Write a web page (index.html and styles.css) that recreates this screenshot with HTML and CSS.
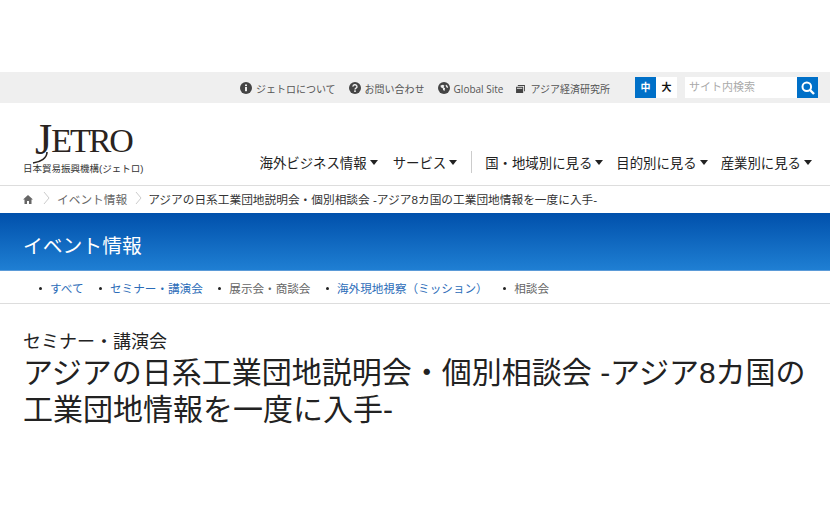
FILE: index.html
```html
<!DOCTYPE html>
<html lang="ja">
<head>
<meta charset="UTF-8" />
<title>アジアの日系工業団地説明会・個別相談会</title>
<link rel="stylesheet" href="styles.css">
</head>
<body>

<!-- Utility bar -->
<div class="util">
  <a class="util-link"><svg class="util-icon" viewBox="0 0 12 12"><circle cx="6" cy="6" r="6" fill="#444"/><rect x="5" y="5" width="2" height="4.2" fill="#efefef"/><rect x="5" y="2.5" width="2" height="1.6" fill="#efefef"/></svg>ジェトロについて</a>
  <a class="util-link"><svg class="util-icon" viewBox="0 0 12 12"><circle cx="6" cy="6" r="6" fill="#444"/><path d="M4 4.6a2 1.8 0 1 1 3 1.5c-.7.4-1 .7-1 1.4" fill="none" stroke="#efefef" stroke-width="1.4"/><rect x="5.1" y="8.4" width="1.8" height="1.5" fill="#efefef"/></svg>お問い合わせ</a>
  <a class="util-link latin"><svg class="util-icon" viewBox="0 0 12 12"><circle cx="6" cy="6" r="6" fill="#444"/><path d="M2.5 3.5l2.5-.8 1.5 1-1 1.6 1.6 1-.6 2.6-1.4-.8-.3-1.8-2-1zM8 2.5l1.6 1.4.6 2-1.6-.5-1-1.6z" fill="#efefef"/></svg>Global Site</a>
  <a class="util-link"><svg class="util-icon-small" viewBox="0 0 10 9"><path d="M2 0h8v7H9V1H2z" fill="#444"/><rect x="0" y="2" width="8" height="7" fill="#444"/><rect x="1" y="3.2" width="6" height="1" fill="#efefef"/></svg>アジア経済研究所</a>
  <div class="size-switch">
    <span class="size-btn active">中</span>
    <span class="size-btn">大</span>
  </div>
  <div class="search">
    <span class="search-input">サイト内検索</span>
    <span class="search-btn"><svg viewBox="0 0 14 14" width="14" height="14"><circle cx="5.8" cy="5.8" r="4.3" fill="none" stroke="#fff" stroke-width="2"/><path d="M9 9l4 4" stroke="#fff" stroke-width="2.4"/></svg></span>
  </div>
</div>

<!-- Header -->
<div class="header">
  <div class="logo">
    <div class="logo-mark"><span class="logo-j">J<svg class="logo-tail" viewBox="0 0 18 12"><path d="M15 0c0 6-6 10-14 11" fill="none" stroke="#2a2320" stroke-width="1.6"/></svg></span>ETRO</div>
    <div class="logo-sub">日本貿易振興機構(ジェトロ)</div>
  </div>
  <div class="gnav">
    <a class="gnav-item">海外ビジネス情報</a>
    <a class="gnav-item">サービス</a>
    <span class="gnav-sep"></span>
    <a class="gnav-item">国・地域別に見る</a>
    <a class="gnav-item">目的別に見る</a>
    <a class="gnav-item">産業別に見る</a>
  </div>
</div>

<!-- Breadcrumb -->
<div class="crumbs">
  <svg class="crumb-home" viewBox="0 0 11 10"><path d="M5.5 0L11 5H9.4v5H6.6V6.6H4.4V10H1.6V5H0z" fill="#666"/></svg>
  <svg class="crumb-sep" viewBox="0 0 7 14"><path d="M1 1l5 6-5 6" fill="none" stroke="#ccc"/></svg>
  <a class="crumb-link">イベント情報</a>
  <svg class="crumb-sep" viewBox="0 0 7 14"><path d="M1 1l5 6-5 6" fill="none" stroke="#ccc"/></svg>
  <span>アジアの日系工業団地説明会・個別相談会 -アジア8カ国の工業団地情報を一度に入手-</span>
</div>

<!-- Section title -->
<div class="section-band">イベント情報</div>

<!-- Sub navigation -->
<ul class="subnav">
  <li><a class="on">すべて</a></li>
  <li><a class="on">セミナー・講演会</a></li>
  <li><a>展示会・商談会</a></li>
  <li><a class="on">海外現地視察（ミッション）</a></li>
  <li><a>相談会</a></li>
</ul>

<!-- Title -->
<div class="content">
  <div class="category">セミナー・講演会</div>
  <h1>アジアの日系工業団地説明会・個別相談会 -アジア8カ国の工業団地情報を一度に入手-</h1>
</div>

</body>
</html>
```
FILE: styles.css
```css
body {
  font-family: "Liberation Sans", "Noto Sans CJK JP", sans-serif;
  background: #fff;
  margin: 0;
  padding-top: 72px;
  color: #222;
  overflow: hidden;
}

a {
  text-decoration: none;
}

/* Utility bar */
.util {
  display: flex;
  align-items: center;
  justify-content: flex-end;
  height: 31px;
  background: #efefef;
}
.util-link {
  display: flex;
  align-items: center;
  font-size: 10px;
  color: #555;
  margin-right: 13px;
  padding-top: 2px;
}
.util-link.latin {
  font-family: "Open Sans", sans-serif;
}
.util-icon {
  width: 12px;
  height: 12px;
  margin-right: 4px;
  margin-top: -2px;
}
.util-icon-small {
  width: 9px;
  height: 8px;
  margin-right: 5px;
  margin-top: 1px;
}
.size-switch {
  display: flex;
  margin-left: 12px;
}
.size-btn {
  width: 21px;
  height: 21px;
  line-height: 21px;
  text-align: center;
  font-size: 10px;
  font-weight: 700;
  background: #fff;
  color: #111;
}
.size-btn.active {
  background: #0070c8;
  color: #fff;
}
.search {
  display: flex;
  margin-left: 8px;
}
.search-input {
  width: 108px;
  height: 21px;
  line-height: 21px;
  padding-left: 4px;
  font-size: 11px;
  color: #aaa;
  background: #fff;
}
.search-btn {
  display: flex;
  align-items: center;
  justify-content: center;
  width: 21px;
  height: 21px;
  background: #0070c8;
  margin-right: 12px;
}

/* Header */
.header {
  display: flex;
  justify-content: space-between;
  align-items: flex-end;
  height: 82px;
  border-bottom: 1px solid #ddd;
}
.logo {
  padding: 0 0 9px 23px;
}
.logo-mark {
  font-family: "Liberation Serif", serif;
  font-size: 34px;
  line-height: 36px;
  letter-spacing: -2px;
  color: #2a2320;
  margin-left: 12px;
}
.logo-j {
  position: relative;
  top: 2px;
  font-size: 44px;
  letter-spacing: -1px;
}
.logo-tail {
  position: absolute;
  left: -3px;
  bottom: 0;
  width: 18px;
  height: 12px;
}
.logo-sub {
  font-size: 9.5px;
  line-height: 14px;
  color: #333;
  margin-top: 3px;
}
.gnav {
  display: flex;
  align-items: center;
  padding: 0 18px 12px 0;
}
.gnav-item {
  display: flex;
  align-items: center;
  font-size: 13.4px;
  color: #222;
  margin-right: 13px;
}
.gnav-item:first-child {
  margin-right: 15px;
}
.gnav-item::after {
  content: "";
  margin-left: 3px;
  border-left: 4.5px solid transparent;
  border-right: 4.5px solid transparent;
  border-top: 5px solid #222;
}
.gnav-item:last-child {
  margin-right: 0;
}
.gnav-sep {
  width: 1px;
  height: 22px;
  background: #ccc;
  margin: 0 13px 0 1px;
}

/* Breadcrumb */
.crumbs {
  display: flex;
  align-items: center;
  height: 24px;
  padding: 0 0 3px 23px;
  font-size: 11.7px;
  color: #333;
}
.crumb-home {
  width: 10px;
  height: 9px;
  margin-top: 2px;
}
.crumb-sep {
  width: 7px;
  height: 14px;
  margin: 0 7px 0 10px;
}
.crumb-link + .crumb-sep {
  margin: 0 6px 0 8px;
}
.crumb-link {
  color: #666;
}

/* Section band */
.section-band {
  height: 49px;
  line-height: 50px;
  padding: 8px 0 0 23px;
  font-size: 19.8px;
  color: #fff;
  background: linear-gradient(#0050ab, #1f7fd3);
  border-bottom: 1px solid #5b9bd8;
}

/* Sub navigation */
.subnav {
  display: flex;
  list-style: none;
  margin: 0;
  padding: 2px 0 0 39px;
  height: 30px;
  align-items: center;
  border-bottom: 1px solid #ddd;
  font-size: 11.6px;
}
.subnav li {
  display: flex;
  align-items: center;
  margin-right: 15.5px;
}
.subnav li::before {
  content: "";
  width: 3px;
  height: 3px;
  border-radius: 50%;
  background: #222;
  margin-right: 8px;
}
.subnav a {
  color: #666;
}
.subnav a.on {
  color: #2b6cb8;
}

/* Title */
.content {
  padding: 26px 23px 0;
}
.category {
  font-size: 18px;
  line-height: 24px;
  color: #222;
}
h1 {
  font-size: 30px;
  font-weight: 400;
  line-height: 37px;
  margin: 0;
  color: #222;
}
```
